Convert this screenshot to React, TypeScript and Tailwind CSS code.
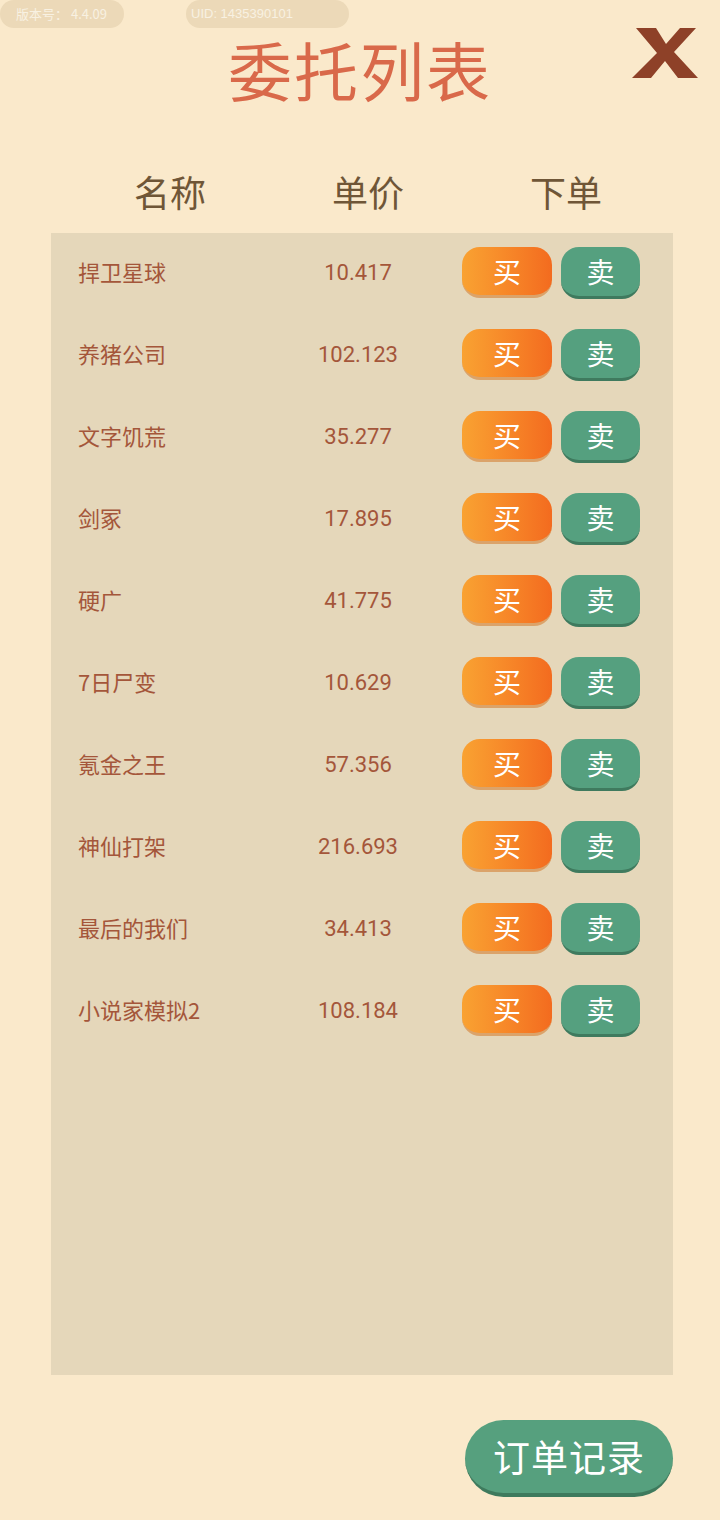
import React from 'react';

const items = [
  { name: '捍卫星球', price: '10.417' },
  { name: '养猪公司', price: '102.123' },
  { name: '文字饥荒', price: '35.277' },
  { name: '剑冢', price: '17.895' },
  { name: '硬广', price: '41.775' },
  { name: '7日尸变', price: '10.629' },
  { name: '氪金之王', price: '57.356' },
  { name: '神仙打架', price: '216.693' },
  { name: '最后的我们', price: '34.413' },
  { name: '小说家模拟2', price: '108.184' },
];

const font = { fontFamily: '"Noto Sans CJK SC", "Noto Sans", "Liberation Sans", sans-serif' };

const App = () => {
  return (
    <div className="w-[720px] h-[1520px] bg-[#fae9cb] flex flex-col overflow-hidden" style={font}>
      {/* Top info pills */}
      <div className="flex h-[28px] text-[13px] text-[#f8f1e2]">
        <div className="w-[124px] h-[28px] rounded-full bg-[#ecd9b8] flex items-center pl-[16px]">版本号：&nbsp;4.4.09</div>
        <div className="ml-[62px] w-[163px] h-[28px] rounded-full bg-[#ecd9b8] flex items-center pl-[5px]" style={{ fontFamily: '"Liberation Sans", sans-serif' }}>UID: 1435390101</div>
      </div>

      {/* Title */}
      <div className="relative h-[112px]">
        <h1 className="text-center text-[64px] leading-[84px] text-[#d9694a] -mt-[2px] tracking-[2px]">委托列表</h1>
        <svg className="absolute right-[22px] top-[0px]" width="66" height="50" viewBox="0 0 66 50">
          <path d="M4 0 H24 L34 16 L48 0 H64 L42 24 L66 50 H46 L33 33 L19 50 H0 L25 25 Z" fill="#8e4128" />
        </svg>
      </div>

      {/* Header */}
      <div className="flex items-center h-[93px] pl-[51px] pt-[8px] text-[36px] text-[#6f5637]">
        <div className="w-[238px] shrink-0 text-center">名称</div>
        <div className="w-[158px] shrink-0 text-center">单价</div>
        <div className="w-[238px] shrink-0 text-center">下单</div>
      </div>

      {/* Table panel */}
      <div className="ml-[51px] w-[622px] h-[1142px] bg-[#e5d7ba] pt-[13px]">
        {items.map((it) => (
          <div key={it.name} className="flex items-center h-[82px] pb-[29px]">
            <div className="w-[230px] pl-[27px] text-[22px] text-[#a4563a] -mt-[3px]">{it.name}</div>
            <div className="w-[154px] text-center text-[22px] text-[#a4563a]" style={{ fontFamily: '"Roboto", "Liberation Sans", sans-serif' }}>{it.price}</div>
            <div className="ml-[27px] flex gap-[9px]">
              <button className="w-[90px] h-[51px] rounded-[18px] bg-gradient-to-r from-[#f9a232] to-[#f36b1f] border-b-[3px] border-[#dba36a] text-white text-[28px] leading-none">买</button>
              <button className="w-[79px] h-[52px] rounded-[18px] bg-[#55a07f] border-b-[3px] border-[#3f7a5e] text-white text-[28px] leading-none">卖</button>
            </div>
          </div>
        ))}
      </div>

      {/* Order record button */}
      <div className="flex justify-end pr-[47px] pt-[45px]">
        <button className="w-[208px] h-[77px] rounded-full bg-[#56a07e] border-b-[4px] border-[#3e7a5d] text-white text-[37px] tracking-[1px]">订单记录</button>
      </div>
    </div>
  );
};

export default App;
